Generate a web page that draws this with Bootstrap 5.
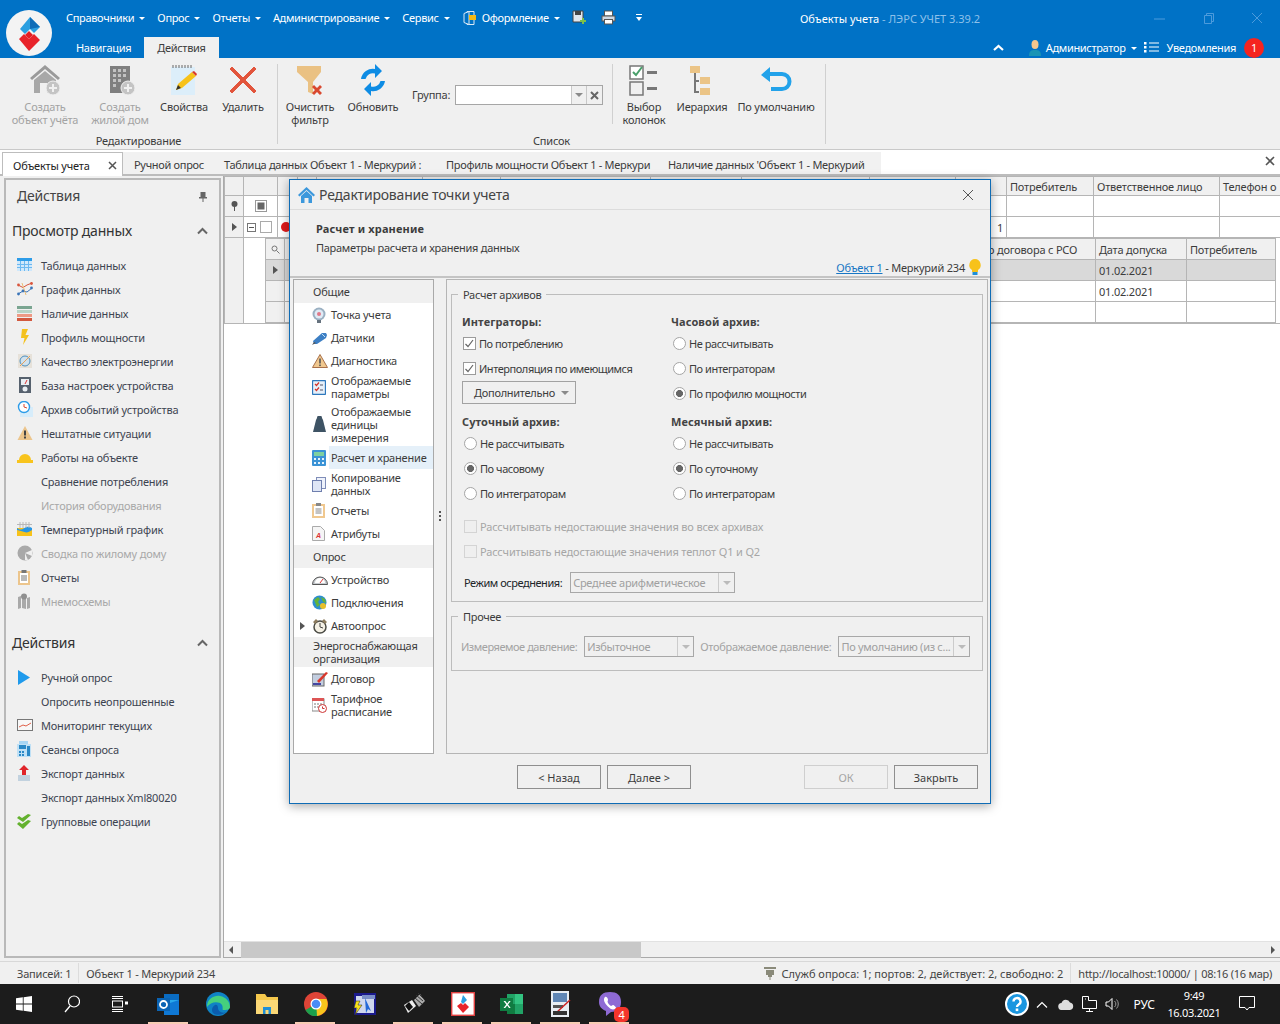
<!DOCTYPE html>
<html lang="ru"><head><meta charset="utf-8"><title>Объекты учета</title>
<link href="https://cdn.jsdelivr.net/npm/bootstrap@5.3.0/dist/css/bootstrap.min.css" rel="stylesheet">
<style>
html,body{margin:0;height:1024px;overflow:hidden}
body{font-family:"Noto Sans","Open Sans",sans-serif;font-size:11px;line-height:13px;letter-spacing:-.2px;color:#3c3c3c;background:#f0f0f0}
svg{display:block;flex:none}
.flex-none{flex:none}
.appwin{position:relative;width:1280px;height:1024px;overflow:hidden}
.topbar{height:58px;background:#0072c6;color:#fff;letter-spacing:-.32px}
.logocell{width:58px;padding:10px 0 0 6px}
.topa{height:37px;padding:0 0 2px 8px}
.topb{height:21px;padding-left:5px}
.mi{margin-right:12px;white-space:nowrap}
.care{display:inline-block;border:3px solid transparent;border-top-color:#fff;border-bottom:0;margin-left:5px;vertical-align:2px}
.ttl{position:absolute;left:800px;top:12px;white-space:nowrap;color:#fff;letter-spacing:0}
.ttl span{color:#8fc1ea}
.wctl{position:absolute;top:12px}
.gap14{margin-right:14px}.gap20{margin-right:20px}
.tb-tab{padding:4px 13px 0;height:21px;margin-right:0}
.tb-tab.on{background:#f0f0f0;color:#3c3c3c}
.ribbon{height:92px;background:#f0f0f0;border-bottom:1px solid #c9c9c9}
.rgrp{position:relative;border-right:1px solid #d0d0d0;margin-top:6px;height:80px}
.rlabel{position:absolute;left:0;right:0;top:70px;text-align:center}
.rbt{text-align:center;padding-top:0}
.rbt svg{margin:0 auto 4px}
.w52{width:52px}.w54{width:54px}.w56{width:56px}.w62{width:62px}.w66{width:66px}.w70{width:70px}.w74{width:74px}.w76{width:76px}.w94{width:94px}.w204{width:204px}
.off{color:#a3a3a3}
.rsep{width:1px;height:60px;background:#d0d0d0}
.combo{display:flex;align-items:stretch;border:1px solid #a6a6a6;background:#fff}
.combo b{font-weight:400;display:flex;align-items:center;justify-content:center;border-left:1px solid #c8c8c8}
.tri{display:inline-block;border:4px solid transparent;border-top-color:#8a8a8a;border-bottom:0}
.doctabs{height:26px;background:#fff;position:relative;padding-top:2px;border-bottom:2px solid #bcbcbc}
.dt0{width:121px;margin-left:2px;height:24px;border:1px solid #bdbdbd;border-bottom:0;background:#fff;padding:1px 5px 0 10px;color:#222}
.dtw{background:#f1f1f1;height:22px;display:flex;align-items:center;padding-top:2px;letter-spacing:-.3px}
.dt{padding-left:11px;white-space:nowrap}
.dt1{width:90px}.dt2{width:222px}.dt3{width:222px}.dt4{width:224px}
.docx{position:absolute;right:5px;top:6px}
.mainarea{height:785px;background:#f0f0f0}
.sidep{width:223px;padding:2px 2px 3px 4px}
.sideb{height:100%;border:2px solid #b9b9b9;background:#f0f0f0;position:relative;padding:0 0 0 6px}
.sh1{font-size:14px;height:39px;padding:8px 0 0 5px;line-height:16px;color:#444;position:relative}
.sh2{font-size:14px;line-height:18px;color:#333;display:flex;justify-content:space-between;align-items:center;height:24px;padding-right:11px;margin-bottom:10px}
.sl{height:24px;display:flex;align-items:center;color:#3d4450;white-space:nowrap}
.sl.off{color:#a8a8a8}
.sl i{width:29px;flex:none;display:block;padding-left:5px}
.gridw{flex:1;min-width:0;background:#fff;display:flex;flex-direction:column;border-left:1px solid #aaa;border-bottom:1px solid #aaa;margin-bottom:3px}
.gridtop{flex:1;overflow:hidden;min-height:0}
.mgrid{--bs-table-border-color:#b5b5b5;--bs-table-bg:#fff;--bs-table-color:#3c3c3c;table-layout:fixed;margin:0;font-size:11px;line-height:13px;border-color:#b5b5b5}
.mgrid td{padding:0 3px;white-space:nowrap;overflow:hidden;vertical-align:middle}
.outer{width:1075px}
.outer tr.rh{height:19px}.outer tr.rf{height:21px}.outer tr.rd{height:21px}
.hd td,.hd{--bs-table-bg:#f0f0f0;background:#f0f0f0}
td.ind{--bs-table-bg:#f0f0f0;background:#f0f0f0}
.inner{width:1010px}
.inner tr{height:21px}
.sel td{--bs-table-bg:#d9d9d9;background:#d9d9d9}
.hsb{height:16px;background:#f0f0f0;display:flex;align-items:center;border-top:1px solid #e2e2e2;padding:0 5px}
.hsb em{display:block;width:400px;height:16px;background:#c8c8c8;margin-left:8px}
.arL{border:4px solid transparent;border-right-color:#555;border-left:0}
.arR{border:4px solid transparent;border-left-color:#555;border-right:0}
.arRow{display:block;width:0;height:0;border:4px solid transparent;border-left:5px solid #555;border-right:0}
.stat{height:23px;background:#f0f0f0;border-top:1px solid #d8d8d8;padding:0 8px 0 17px;color:#444;white-space:nowrap}
.vs{width:1px;height:20px;background:#dcdcdc;margin:0 7px}
.wide{letter-spacing:0}
.httpt{letter-spacing:-.25px}
.tbar{height:40px;background:#1c1c1c;position:relative;color:#fff}
.tbi{width:49px;height:40px;display:flex;align-items:center;justify-content:center;position:relative}
.tbi.n48{width:48px}
.tbi.act::after{content:"";position:absolute;left:4px;right:5px;bottom:0;height:2px;background:#f7cdb4}
.tray{font-size:12px;line-height:17px;letter-spacing:0}
.dlg{position:absolute;left:289px;top:179px;width:702px;height:625px;background:#f0f0f0;border:1px solid #0f6cb5;box-shadow:0 2px 10px rgba(0,0,0,.35);display:flex;flex-direction:column}
.dtit{height:30px;padding:0 8px 0 8px;font-size:14px;color:#444;border-bottom:1px solid #dcdcdc}
.dhead{height:68px;padding:12px 0 0 26px;position:relative;border-bottom:2px solid #c4c4c4}
.dhead p{margin:0}
.dlink{position:absolute;right:8px;top:49px;display:flex;align-items:center;gap:3px}
.dlink a{color:#1776c4}
.dbody{height:477px;padding:1px 2px 0 3px}
.tree{width:141px;height:475px;border:1px solid #a9a9a9;background:#fff;padding:0;flex:none}
.tg{background:#f0f0f0;height:23px;display:flex;align-items:center;padding-left:19px}
.tg.h30{height:30px}
.ti{height:23px;display:flex;align-items:center;position:relative;white-space:nowrap}
.ti.h30{height:30px}.ti.h44{height:44px}
.ti i{width:35px;display:block;flex:none;padding-left:18px}
.ti span{padding-left:2px}
.ti.on span{background:#e5f0f9;align-self:stretch;display:flex;align-items:center;flex:1}
.ti .exp{position:absolute;left:6px;top:8px}
.split{width:12px;flex:none;display:flex;flex-direction:column;align-items:center;justify-content:center;gap:2px;padding-bottom:3px}
.split u{display:block;width:2px;height:2px;background:#555}
.panel{flex:1;min-width:0;height:475px;border:1px solid #b5b5b5;padding:0 4px;letter-spacing:-.28px}
fieldset.gb{border:1px solid #bdbdbd;position:relative;padding:0 10px;margin:0;min-width:0}
fieldset.gb legend{float:none;width:auto;font-size:11px;line-height:13px;padding:0 5px;margin:0 0 0 -4px;color:#3c3c3c}
.gb1{height:314px;margin-top:8px!important}
.gb2{height:61px;margin-top:8px!important}
.fcols{display:flex}
.fcol{width:209px}
.bh{font-weight:700;height:13px;line-height:13px;color:#444;letter-spacing:.1px}
.chk{display:flex;align-items:center;height:25px;gap:3px;margin:0;white-space:nowrap;letter-spacing:-.45px}
.chk.r{padding-left:1px}
.mt3{margin-top:3px}
.form-check-input.xc{margin:0 0 0 1px;width:13px;height:13px;border:1px solid #9b9b9b;border-radius:0;background-color:#fff;flex:none;box-shadow:none;float:none}
.form-check-input.xc:checked{background-color:#fff;border-color:#9b9b9b;background-image:url("data:image/svg+xml,%3csvg xmlns='http://www.w3.org/2000/svg' viewBox='0 0 13 13'%3e%3cpath fill='none' stroke='%23666' stroke-width='1.2' d='M2.5 7l2.5 2.5 5-6.5'/%3e%3c/svg%3e");background-size:13px}
.form-check-input.xr{margin:0 0 0 1px;width:13px;height:13px;border:1px solid #a5a5a5;background-color:#fff;flex:none;float:none;box-shadow:none;opacity:1}
.form-check-input.xr:checked{background-color:#fff;border-color:#a5a5a5;background-image:radial-gradient(circle,#666 0,#666 3.2px,#fff 3.8px);background-size:auto}
.form-check-input.xc:disabled{opacity:1;border-color:#d4d4d4;background-color:#efefef}
.chk.dis{opacity:1;color:#a6a6a6;letter-spacing:-.16px}
.morebtn{width:114px;height:23px;border:1px solid #a2a2a2;display:flex;align-items:center;justify-content:space-between;padding:0 6px 0 11px}
.cdis{border:1px solid #a8a8a8;background:#f0f0f0;color:#a0a0a0;height:21px;white-space:nowrap;overflow:hidden}
.cdis span{padding:3px 0 0 2px;flex:1;overflow:hidden}
.cdis b{width:16px;border-left:1px solid #ccc}
.cdis .tri{border-top-color:#bbb}
.w165{width:165px}.w110{width:110px}.w132{width:132px}
.dfoot{flex:1;padding:10px 12px 0 227px;gap:6px}
.dbtn{width:84px;height:24px;border:1px solid #8f8f8f;border-radius:0;background:transparent;font-size:11px;line-height:13px;padding:0;color:#3c3c3c}
.dbtn:disabled{border-color:#cfcfcf;color:#a5a5a5;opacity:1;background:transparent}
.m107{margin-left:107px}
.pt0{padding-top:0}
#ntf{width:20px;height:20px;background:#f5241f;font-size:11px}
#rg1{width:278px}#rg2{width:548px}
#glab{margin-top:24px;width:43px}
#gcomb{width:148px;height:20px;margin-top:21px}
#gb1,#gb2{background:#f0f0f0}
#gb1{width:15px}#gb2{width:16px}
#pinic{right:12px;top:12px}
.mhead{margin-top:18px}
.detail{padding:0 0 0 21px!important}
.c19{width:19px}.c20{width:20px}.c34{width:34px}.c51{width:51px}.c78{width:78px}.c80{width:80px}.c86{width:86px}.c87{width:87px}.c89{width:89px}.c91{width:91px}.c106{width:106px}.c119{width:119px}.c126{width:126px}.c128{width:128px}.c150{width:150px}.c692{width:692px}
#vib{right:5px;bottom:2px;width:15px;height:15px;background:#f5352c;border-radius:5px;font-size:11px}
#lng{margin:0 2px 0 4px}
#clk{margin-right:8px;width:74px;font-size:11px;letter-spacing:-.3px}
#ntc{margin-right:25px}
#tq{margin-right:7px}#tc{margin-right:10px}
#fc1{margin-top:14px}#fc2{margin-top:9px}
#d1{margin-top:8px}
#rmode{margin:8px 0 0 2px}
#rmode>span{letter-spacing:-.45px}
#adm{margin-right:7px}
#dav{margin:13px 0 0 -1px;white-space:nowrap}
#dl1{letter-spacing:-.45px}
#dc1{margin:0 6px 0 7px}
#dc2{margin-left:7px}
#hb{margin-bottom:6px;letter-spacing:.15px}
#hp{letter-spacing:-.28px}
</style></head><body>
<div class="appwin d-flex flex-column">

<!-- title bar -->
<div class="topbar d-flex flex-none">
 <div class="logocell"><svg width="46" height="46" viewBox="0 0 46 46"><circle cx="23" cy="23" r="23" fill="#f3f3f3"/><path d="M24 7l10 10-6 6-4-4-5 5-5-5z" fill="#2b9fe0"/><path d="M24 7l10 10-10 2z" fill="#0d6cb8"/><path d="M23 21l4 4-4 4-4-4z" fill="#e31e24"/><path d="M13 29l5-5 5 5 5-5 6 6-11 11z" fill="#e8232a"/></svg></div>
 <div class="flex-grow-1">
  <div class="topa d-flex align-items-center">
   <span class="mi">Справочники<i class="care"></i></span><span class="mi">Опрос<i class="care"></i></span><span class="mi">Отчеты<i class="care"></i></span><span class="mi">Администрирование<i class="care"></i></span><span class="mi">Сервис<i class="care"></i></span>
   <svg class="me-1" width="16" height="16" viewBox="0 0 16 16"><path d="M5 1.5h7v13H5z" fill="none" stroke="#dbe9f5"/><path d="M2 3.5l5-2v13l-5-2z" fill="#0072c6" stroke="#dbe9f5"/><rect x="7" y="5" width="7" height="5" fill="#f5b915"/></svg>
   <span class="mi">Оформление<i class="care"></i></span>
   <svg class="gap14" width="15" height="15" viewBox="0 0 15 15"><path d="M1 1h10v11H1z" fill="#dfe6ee" stroke="#444"/><rect x="3" y="1" width="6" height="4" fill="#444"/><path d="M10 8h2v2h2v2h-2v2h-2v-2H8v-2h2z" fill="#7cc04a"/></svg>
   <svg class="gap20" width="15" height="15" viewBox="0 0 15 15"><rect x="3.5" y="1" width="8" height="5" fill="#fff" stroke="#555"/><rect x="1" y="6" width="13" height="5" fill="#cfd8e2" stroke="#555"/><rect x="3.5" y="9.500" width="8" height="4.500" fill="#fff" stroke="#555"/></svg>
   <svg width="6" height="8" viewBox="0 0 6 8"><path d="M0 0h6v1H0zM0 3h6L3 7z" fill="#fff"/></svg>
  </div>
  <div class="topb d-flex">
   <span class="tb-tab">Навигация</span><span class="tb-tab on">Действия</span>
   <div class="ms-auto d-flex align-items-center pe-0">
    <svg class="gap20" width="11" height="8" viewBox="0 0 11 8"><path d="M1 6l4.500-4L10 6" fill="none" stroke="#fff" stroke-width="2.200"/></svg>
    <svg class="ms-1 me-1" width="14" height="16" viewBox="0 0 14 16"><ellipse cx="7" cy="4.500" rx="3.500" ry="4.500" fill="#f5c68d"/><path d="M1 16c0-5 2-6 6-6s6 1 6 6z" fill="#1994b5"/></svg>
    <span class="mi" id="adm">Администратор<i class="care"></i></span>
    <svg class="me-1" width="15" height="11" viewBox="0 0 15 11"><path d="M0 0h2.500v2.500H0zM0 4h2.500v2.500H0zM0 8h2.500v2.500H0zM5 .5h10v1H5zM5 4.500h10v1H5zM5 8.500h10v1H5z" fill="#fff"/></svg>
    <span class="ms-1">Уведомления</span>
    <span class="d-flex align-items-center justify-content-center rounded-circle ms-2 me-3" id="ntf">1</span>
   </div>
  </div>
 </div>
</div>
<div class="ttl">Объекты учета <span>- ЛЭРС УЧЕТ 3.39.2</span></div>
<svg class="wctl" style="left:1153px" width="13" height="13" viewBox="0 0 13 13"><path d="M1 7h11" stroke="#4c9bdc"/></svg>
<svg class="wctl" style="left:1203px" width="12" height="13" viewBox="0 0 12 13"><path d="M1.500 3.500h7v8h-7zM3.500 3.500V1.500h7v8h-2" fill="none" stroke="#4c9bdc"/></svg>
<svg class="wctl" style="left:1251px" width="12" height="12" viewBox="0 0 12 12"><path d="M1 1l10 10M11 1L1 11" stroke="#4c9bdc"/></svg>

<!-- ribbon -->
<div class="ribbon d-flex flex-none">
 <div class="rgrp d-flex ps-2" id="rg1">
  <div class="rbt w74 off"><svg width="32" height="32" viewBox="0 0 32 32"><path d="M16 1L1 14l2 2L16 5l13 11 2-2z" fill="#9a9a9a"/><path d="M5 16l11-9 11 9v13H5z" fill="#a8a8a8"/><rect x="11" y="19" width="7" height="10" fill="#f0f0f0"/><circle cx="24" cy="24" r="7" fill="#c4c4c4" stroke="#f0f0f0"/><path d="M23 20h2v3h3v2h-3v3h-2v-3h-3v-2h3z" fill="#f0f0f0"/></svg>Создать<br>объект учёта</div>
  <div class="rbt w76 off"><svg width="32" height="32" viewBox="0 0 32 32"><rect x="6" y="2" width="20" height="27" fill="#7f7f7f"/><path d="M9 5h3v3H9zM14 5h3v3h-3zM19 5h3v3h-3zM9 10h3v3H9zM14 10h3v3h-3zM19 10h3v3h-3zM9 15h3v3H9zM14 15h3v3h-3zM9 20h3v3H9z" fill="#c2c2c2"/><circle cx="24" cy="24" r="7" fill="#c4c4c4" stroke="#f0f0f0"/><path d="M23 20h2v3h3v2h-3v3h-2v-3h-3v-2h3z" fill="#f0f0f0"/></svg>Создать<br>жилой дом</div>
  <div class="rbt w52"><svg width="32" height="32" viewBox="0 0 32 32"><rect x="3" y="3" width="24" height="28" fill="#dceefa"/><path d="M5 1v3M8 1v3M11 1v3M14 1v3M17 1v3M20 1v3M23 1v3" stroke="#666"/><path d="M8 26l2-6L24 8l4 4-14 12z" fill="#f7c21a"/><path d="M24 8l2-1 3 3-1 2z" fill="#d9372a"/><path d="M8 26l2-5 3 3z" fill="#333"/></svg>Свойства</div>
  <div class="rbt w66"><svg width="32" height="32" viewBox="0 0 32 32"><path d="M5 3L3 5l11 11L3 27l2 2 11-11 11 11 2-2-11-11L29 5l-2-2-11 11z" fill="#e2553c" stroke="#e2553c"/></svg>Удалить</div>
  <div class="rlabel">Редактирование</div>
 </div>
 <div class="rgrp d-flex ps-1" id="rg2">
  <div class="rbt w56"><svg width="32" height="32" viewBox="0 0 32 32"><path d="M3 2h24v6l-8 10v12l-5-2V18L3 8z" fill="#eac183"/><path d="M20 21l3 3 3-3 2 2-3 3 3 3-2 2-3-3-3 3-2-2 3-3-3-3z" fill="#d9482f"/></svg>Очистить<br>фильтр</div>
  <div class="rbt w70"><svg width="32" height="32" viewBox="0 0 32 32"><path d="M4 15A12 12 0 0 1 18 5V0l7 7-7 7V9.500A7.500 7.500 0 0 0 8.500 15z" fill="#0e8ce4"/><path d="M28 17A12 12 0 0 1 14 27v5l-7-7 7-7v4.500A7.500 7.500 0 0 0 23.500 17z" fill="#0e8ce4"/></svg>Обновить</div>
  <div class="w204 d-flex align-items-start ps-1"><span class="pt-0" id="glab">Группа:</span><div class="combo" id="gcomb"><span class="flex-grow-1"></span><b id="gb1"><i class="tri"></i></b><b id="gb2"><svg width="9" height="9" viewBox="0 0 9 9"><path d="M1 1l7 7M8 1L1 8" stroke="#666" stroke-width="2"/></svg></b></div></div>
  <div class="rsep"></div>
  <div class="rbt w62"><svg width="32" height="32" viewBox="0 0 32 32"><rect x="2" y="2" width="13" height="13" fill="#fff" stroke="#777" stroke-width="1.500"/><path d="M5 8l3 3 6-8" fill="none" stroke="#49a06b" stroke-width="2"/><rect x="2" y="18" width="13" height="13" fill="none" stroke="#777" stroke-width="1.500"/><path d="M19 7h10v3H19zM19 23h10v3H19z" fill="#777"/></svg>Выбор<br>колонок</div>
  <div class="rbt w54"><svg width="32" height="32" viewBox="0 0 32 32"><rect x="4" y="2" width="10" height="7" fill="#ebc486"/><path d="M9 9v19h4M9 17h4" fill="none" stroke="#777" stroke-width="2"/><rect x="14" y="13" width="10" height="7" fill="#ebc486"/><rect x="14" y="24" width="10" height="7" fill="#ebc486"/></svg>Иерархия</div>
  <div class="rbt w94"><svg width="32" height="32" viewBox="0 0 32 32"><path d="M1 11l9-8v5h12a8.500 8.500 0 0 1 0 19H11v-4h11a4.500 4.500 0 0 0 0-11H10v6z" fill="#22a2ea"/></svg>По умолчанию</div>
  <div class="rlabel">Список</div>
 </div>
</div>

<!-- document tabs -->
<div class="doctabs d-flex flex-none">
 <div class="dt0 d-flex align-items-center justify-content-between"><span>Объекты учета</span><svg width="9" height="9" viewBox="0 0 9 9"><path d="M1 1l7 7M8 1L1 8" stroke="#555" stroke-width="1.500"/></svg></div>
 <div class="dtw"><div class="dt dt1">Ручной опрос</div><div class="dt dt2">Таблица данных Объект 1 - Меркурий :</div><div class="dt dt3">Профиль мощности Объект 1 - Меркури</div><div class="dt dt4">Наличие данных 'Объект 1 - Меркурий</div></div>
 <svg class="docx" width="10" height="10" viewBox="0 0 10 10"><path d="M1 1l8 8M9 1L1 9" stroke="#555" stroke-width="1.600"/></svg>
</div>

<!-- main -->
<div class="mainarea d-flex flex-none">
 <div class="sidep flex-none">
  <div class="sideb">
   <div class="sh1 pin">Действия<svg class="position-absolute" id="pinic" width="8" height="10" viewBox="0 0 8 10"><path d="M1.500 0h5v5h1.500v1.500H4.500V10h-1V6.500H0V5h1.500z" fill="#666"/></svg></div>
   <div class="sh2">Просмотр данных<svg width="11" height="8" viewBox="0 0 11 8"><path d="M1 6.500l4.500-4.500 4.500 4.500" fill="none" stroke="#666" stroke-width="2"/></svg></div>
   <div id="sb1">
   <div class="sl"><i><svg width="16" height="14" viewBox="0 0 16 14"><rect width="15" height="13" fill="#cfe8fb"/><rect width="15" height="3" fill="#2d9ce8"/><path d="M0 6.500h15M0 9.500h15M3.500 3v10M7.500 3v10M11.500 3v10" stroke="#6cb8f0"/></svg></i>Таблица данных</div>
   <div class="sl"><i><svg width="16" height="14" viewBox="0 0 16 14"><path d="M1 3l5 2.500L10 3l5-2" fill="none" stroke="#d9553c"/><path d="M1 12l5-3 4 1 5-4" fill="none" stroke="#3a74b8"/><path d="M5 1l4 12" stroke="#ecbe76"/><circle cx="1.500" cy="3" r="1.400" fill="#d9553c"/><circle cx="14.500" cy="1.500" r="1.400" fill="#d9553c"/><circle cx="6" cy="9" r="1.400" fill="#3a74b8"/><circle cx="1.500" cy="12" r="1.400" fill="#3a74b8"/><circle cx="14.500" cy="6" r="1.400" fill="#3a74b8"/></svg></i>График данных</div>
   <div class="sl"><i><svg width="16" height="15" viewBox="0 0 16 15"><rect width="15" height="3" fill="#7aa591"/><rect y="4" width="15" height="3" fill="#b8d4c6"/><rect y="8" width="15" height="3" fill="#ed9a85"/><rect y="12" width="15" height="3" fill="#d2593f"/></svg></i>Наличие данных</div>
   <div class="sl"><i><svg width="16" height="16" viewBox="0 0 16 16"><path d="M5 0h6L8.500 6H12L6 16l1.500-7H4z" fill="#f4c21f"/></svg></i>Профиль мощности</div>
   <div class="sl"><i><svg width="16" height="16" viewBox="0 0 16 16"><rect x="1" y="1" width="14" height="14" fill="#e6e1d9"/><circle cx="8" cy="8" r="5" fill="#cfe1ee" stroke="#4d8fbd"/><path d="M3 13l10-10" stroke="#e6a15a"/></svg></i>Качество электроэнергии</div>
   <div class="sl"><i><svg width="16" height="16" viewBox="0 0 16 16"><rect x="2" width="12" height="16" fill="#56616e"/><rect x="4" y="2" width="8" height="6" fill="#e9eef2"/><path d="M8 7l2-4" stroke="#d33"/><circle cx="8" cy="12" r="2.500" fill="#e9eef2"/></svg></i>База настроек устройства</div>
   <div class="sl"><i><svg width="16" height="16" viewBox="0 0 16 16"><rect x="3" y="6" width="13" height="10" fill="#d6ecfa"/><circle cx="7" cy="6" r="5.500" fill="#fff" stroke="#2d9ce8" stroke-width="1.400"/><path d="M7 3v3l3 1" fill="none" stroke="#d9482f"/></svg></i>Архив событий устройства</div>
   <div class="sl"><i><svg width="16" height="14" viewBox="0 0 16 14"><path d="M8 0l7.500 14H.5z" fill="#ecc58c"/><rect x="7" y="4.500" width="2" height="5" fill="#444"/><rect x="7" y="10.500" width="2" height="2" fill="#444"/></svg></i>Нештатные ситуации</div>
   <div class="sl"><i><svg width="16" height="12" viewBox="0 0 16 12"><path d="M2 9a6 6 0 0 1 12 0h2v3H0V9z" fill="#f8c41d"/></svg></i>Работы на объекте</div>
   <div class="sl"><i></i>Сравнение потребления</div>
   <div class="sl off"><i></i>История оборудования</div>
   <div class="sl"><i><svg width="16" height="14" viewBox="0 0 16 14"><rect y="6" width="15" height="8" fill="#f7c21a"/><path d="M0 6c3 2 4 2 7.500 0s5-1 7.500 0v2c-3 2-5 3-7.500 2S3 9 0 8z" fill="#2896e4"/><path d="M3 0v6M6 0v6M9 0v6M12 0v6M0 2.500h15" stroke="#b8b8b8"/></svg></i>Температурный график</div>
   <div class="sl off"><i><svg width="16" height="16" viewBox="0 0 16 16"><circle cx="8" cy="8" r="7.500" fill="#a9a9a9"/><path d="M8 8l7-3v6z" fill="#f0f0f0"/><path d="M8 8l3 7H8z" fill="#f0f0f0"/></svg></i>Сводка по жилому дому</div>
   <div class="sl"><i><svg width="14" height="15" viewBox="0 0 14 15"><rect x="1" y="1" width="12" height="14" fill="#ecc58c"/><rect x="3" y="3" width="8" height="10" fill="#fff"/><rect x="4.500" width="5" height="3" fill="#777"/><path d="M4 6h6M4 8h6M4 10h6" stroke="#777"/></svg></i>Отчеты</div>
   <div class="sl off"><i><svg width="14" height="16" viewBox="0 0 14 16"><path d="M1 4l3-1v12l-3 1zM5 3l4 2v11l-4-1zM10 5l3-1v11l-3 1z" fill="#a9a9a9"/><circle cx="7" cy="3.500" r="3" fill="#8f8f8f"/></svg></i>Мнемосхемы</div>
   </div>
   <div class="sh2 mhead">Действия<svg width="11" height="8" viewBox="0 0 11 8"><path d="M1 6.500l4.500-4.500 4.500 4.500" fill="none" stroke="#666" stroke-width="2"/></svg></div>
   <div id="sb2">
   <div class="sl"><i><svg width="14" height="15" viewBox="0 0 14 15"><path d="M1 0l12 7.500L1 15z" fill="#1f9aec"/></svg></i>Ручной опрос</div>
   <div class="sl"><i></i>Опросить неопрошенные</div>
   <div class="sl"><i><svg width="16" height="12" viewBox="0 0 16 12"><rect x=".5" y=".5" width="15" height="11" fill="#f8f8f8" stroke="#777"/><path d="M2 8l4-2 3 1 5-3" fill="none" stroke="#e0604a"/></svg></i>Мониторинг текущих</div>
   <div class="sl"><i><svg width="15" height="16" viewBox="0 0 15 16"><rect x="2" width="9" height="3" fill="#a8d6f4"/><rect y="3" width="14" height="13" fill="#bfe0f5"/><rect x="2" y="4" width="7" height="4" fill="#2a88c6"/><path d="M2 10h2v2H2zM5 10h2v2H5zM2 13h2v2H2zM5 13h2v2H5zM10 5h3v10h-3z" fill="#2a88c6"/></svg></i>Сеансы опроса</div>
   <div class="sl"><i><svg width="14" height="16" viewBox="0 0 14 16"><rect x="1" y="10" width="12" height="6" fill="#c2d2df"/><path d="M7 0l5 5H9v5H5V5H2z" fill="#e0252a"/></svg></i>Экспорт данных</div>
   <div class="sl"><i></i>Экспорт данных Xml80020</div>
   <div class="sl"><i><svg width="14" height="15" viewBox="0 0 14 15"><path d="M0 4l2-2 3 2 6-4 3 1-8 7zM0 10l2-2 3 2 6-4 3 1-8 8z" fill="#63b12e"/></svg></i>Групповые операции</div>
   </div>
  </div>
 </div>
 <div class="gridw">
  <div class="gridtop">
  <table class="table table-bordered mgrid outer">
   <colgroup><col class="c19"><col class="c34"><col class="c20"><col class="c19"><col class="c106"><col class="c78"><col class="c150"><col class="c91"><col class="c128"><col class="c86"><col class="c51"><col class="c87"><col class="c126"><col class="c80"></colgroup>
   <tr class="rh hd"><td></td><td></td><td></td><td></td><td></td><td></td><td></td><td></td><td></td><td></td><td>&nbsp;</td><td>Потребитель</td><td>Ответственное лицо</td><td>Телефон о</td></tr>
   <tr class="rf"><td class="ind"><svg class="mx-auto" width="7" height="10" viewBox="0 0 7 10"><circle cx="3.500" cy="3" r="3" fill="#555"/><path d="M3 5h1v5H3z" fill="#555"/></svg></td><td><svg class="mx-auto" width="12" height="12" viewBox="0 0 12 12"><rect x=".5" y=".5" width="11" height="11" fill="#fff" stroke="#999"/><rect x="2.500" y="2.500" width="7" height="7" fill="#666"/></svg></td><td></td><td></td><td></td><td></td><td></td><td></td><td></td><td></td><td></td><td></td><td></td><td></td></tr>
   <tr class="rd"><td class="ind"><i class="arRow mx-auto"></i></td><td class="pt0"><div class="d-flex align-items-center gap-1"><svg width="9" height="9" viewBox="0 0 9 9"><rect x=".5" y=".5" width="8" height="8" fill="#fff" stroke="#777"/><path d="M2 4.500h5" stroke="#555"/></svg><svg width="12" height="12" viewBox="0 0 12 12"><rect x=".5" y=".5" width="11" height="11" fill="#fff" stroke="#aaa"/></svg></div></td><td><svg width="10" height="10" viewBox="0 0 10 10"><circle cx="5" cy="5" r="5" fill="#e01b1b"/></svg></td><td></td><td></td><td></td><td></td><td></td><td></td><td></td><td class="text-end">1</td><td></td><td></td><td></td></tr>
   <tr><td class="ind"></td><td colspan="13" class="detail">
    <table class="table table-bordered mgrid inner">
     <colgroup><col class="c19"><col class="c692"><col class="c119"><col class="c91"><col class="c89"></colgroup>
     <tr class="hd"><td><svg class="mx-auto" width="9" height="9" viewBox="0 0 9 9"><circle cx="3.500" cy="3.500" r="2.500" fill="none" stroke="#777"/><path d="M5.500 5.500L8.500 8.500" stroke="#777"/></svg></td><td></td><td>Но договора с РСО</td><td>Дата допуска</td><td>Потребитель</td></tr>
     <tr class="sel"><td class="ind"><i class="arRow mx-auto"></i></td><td></td><td></td><td>01.02.2021</td><td></td></tr>
     <tr><td class="ind"></td><td></td><td></td><td>01.02.2021</td><td></td></tr>
     <tr><td class="ind"></td><td></td><td></td><td></td><td></td></tr>
    </table>
   </td></tr>
  </table>
  </div>
  <div class="hsb"><i class="arL"></i><em></em><i class="arR ms-auto"></i></div>
 </div>
</div>

<!-- status -->
<div class="stat d-flex align-items-center flex-none">
 <span>Записей: 1</span><span class="vs"></span><span>Объект 1 - Меркурий 234</span>
 <svg class="ms-auto me-1" width="14" height="14" viewBox="0 0 14 14"><path d="M1 1h12v2H1zM3 4h8v5H3zM5 9h4v2H5zM6.500 11h1v3h-1z" fill="#8a8a7a"/></svg>
 <span class="wide">Служб опроса: 1; портов: 2, действует: 2, свободно: 2</span><span class="vs"></span><span class="httpt">http://localhost:10000/ | 08:16 (16 мар)</span>
</div>

<!-- taskbar -->
<div class="tbar d-flex align-items-center flex-none">
 <div class="tbi n48"><svg width="16" height="16" viewBox="0 0 16 16"><path d="M0 2.300l6.800-1v6.200H0zM7.600 1.200L16 0v7.500H7.600zM0 8.400h6.800v6.300L0 13.700zM7.600 8.400H16V16l-8.400-1.200z" fill="#fff"/></svg></div>
 <div class="tbi n48"><svg width="16" height="18" viewBox="0 0 16 18"><circle cx="10" cy="6.500" r="5.500" fill="none" stroke="#fff" stroke-width="1.200"/><path d="M6 11l-5 6" stroke="#fff" stroke-width="1.300"/></svg></div>
 <div class="tbi n48"><svg width="16" height="16" viewBox="0 0 16 16"><path d="M0 .5h11M0 15.500h11M0 2.500h11M0 13.500h11" stroke="#fff"/><rect x=".5" y="5" width="10" height="6" fill="none" stroke="#fff"/><rect x="13" y="5.500" width="3" height="3" fill="#fff"/></svg></div>
 <div class="tbi act"><svg width="24" height="24" viewBox="0 0 24 24"><path d="M7 2h15v21H7z" fill="#28a8ea"/><path d="M7 2h15v6H7z" fill="#0a6cc2"/><path d="M7 13l15-5v15H7z" fill="#0f78d4"/><rect y="6" width="13" height="13" fill="#0b64b4"/><circle cx="6.500" cy="12.500" r="3.500" fill="none" stroke="#fff" stroke-width="1.800"/></svg></div>
 <div class="tbi"><svg width="24" height="24" viewBox="0 0 24 24"><circle cx="12" cy="12" r="12" fill="#0f83c5"/><path d="M1 15C1 6 9 3 14 4c6 1 10 6 10 11 0 3-4 3-7 3-1 0 1-5-3-7-5-2-10 0-13 4z" fill="#46d07d"/><path d="M9 13c2-1 3 1 3 3 0 3 4 6 8 4-4 4-14 4-14-2 0-2 1-4 3-5z" fill="#0b5cad"/></svg></div>
 <div class="tbi"><svg width="24" height="22" viewBox="0 0 24 22"><path d="M1 1h9l2 3h11v17H1z" fill="#f5c84c"/><path d="M1 7h22v14H1z" fill="#fbd876"/><rect x="8" y="14" width="8" height="7" fill="#1f8fd8"/><rect x="10.500" y="17" width="3" height="4" fill="#fbd876"/></svg></div>
 <div class="tbi act"><svg width="24" height="24" viewBox="0 0 24 24"><circle cx="12" cy="12" r="12" fill="#dd4437"/><path d="M12 12L1.500 18A12 12 0 0 0 14 24z" fill="#1ca04c"/><path d="M12 7h10.500A12 12 0 0 1 13 24z" fill="#f8c51c"/><circle cx="12" cy="12" r="5.500" fill="#fff"/><circle cx="12" cy="12" r="4.300" fill="#4a8cf6"/></svg></div>
 <div class="tbi"><svg width="24" height="24" viewBox="0 0 24 24"><rect x="1" y="1" width="22" height="22" fill="#1a1a8c"/><rect x="3" y="4" width="18" height="17" fill="#cfd8ee"/><path d="M9 3h13v4H9z" fill="#7a8fc8"/><path d="M12 6l6 13-3-2-2 4z" fill="#2268d8"/><path d="M7 9h-4L1 16h3l-2 7 7-10H5z" fill="#f6e21a" stroke="#222" stroke-width=".5"/></svg></div>
 <div class="tbi act"><svg width="24" height="24" viewBox="0 0 24 24"><path d="M2 13l8-5 4 6-8 7z" fill="#eee"/><path d="M12 8l6-6 5 7-6 6z" fill="#aaa"/><path d="M3 14l4 5 4-4-4-5z" fill="#111"/><path d="M14 3l7 6M13 6l7 6M16 1l6 6" stroke="#333"/></svg></div>
 <div class="tbi act"><svg width="24" height="24" viewBox="0 0 24 24"><rect width="24" height="24" fill="#fff"/><rect x=".7" y=".7" width="22.600" height="22.600" fill="none" stroke="#e04040" stroke-width="1.400"/><path d="M12 3l4 5-4 4-2-2z" fill="#2b9fe0"/><path d="M6 14l4-3 2 2 2-2 4 4-6 6z" fill="#e8232a"/></svg></div>
 <div class="tbi act"><svg width="24" height="24" viewBox="0 0 24 24"><rect x="7" y="2" width="16" height="20" fill="#21a366"/><rect x="15" y="2" width="8" height="10" fill="#33c481"/><rect x="7" y="12" width="8" height="10" fill="#107c41"/><rect y="6" width="13" height="13" fill="#107c41"/><path d="M3.500 9l2.800 3.500L3.500 16h1.700l2-2.500 1.800 2.500h1.700L8 12.500 10.700 9H9l-1.800 2.400L5.300 9z" fill="#fff"/></svg></div>
 <div class="tbi act"><svg width="22" height="26" viewBox="0 0 22 26"><rect x="1" y="0" width="18" height="26" fill="#e8edf2"/><rect x="3" y="2" width="14" height="9" fill="#5f86b5"/><rect x="3" y="14" width="10" height="3" fill="#555"/><path d="M20 9L6 22" stroke="#c22" stroke-width="1.500"/><rect x="3" y="20" width="14" height="4" fill="#333"/></svg></div>
 <div class="tbi act"><svg width="24" height="26" viewBox="0 0 24 26"><path d="M12 1c7 0 11 3 11 10s-4 10-10 10l-5 4v-5C3 18 1 15 1 11 1 4 5 1 12 1z" fill="#8e6ad4"/><path d="M7 6c2-1 3 2 3 3s-1 1 0 3 3 3 3 3c1 0 1-1 2-1s3 2 3 3-3 2-5 1-7-6-7-9c0-1 0-2 1-3z" fill="#fff"/></svg><span class="position-absolute d-flex align-items-center justify-content-center" id="vib">4</span></div>

 <div class="tray ms-auto d-flex align-items-center">
  <svg id="tq" width="24" height="24" viewBox="0 0 24 24"><circle cx="12" cy="12" r="11" fill="#1a96e0" stroke="#fff" stroke-width="2"/><path d="M8.500 9.500a3.500 3.500 0 1 1 5 3.200c-1 .6-1.500 1-1.500 2.300" fill="none" stroke="#fff" stroke-width="2.400"/><rect x="10.700" y="16.500" width="2.600" height="2.600" fill="#fff"/></svg>
  <svg id="tc" width="12" height="7" viewBox="0 0 12 7"><path d="M1 6.500l5-5 5 5" fill="none" stroke="#fff" stroke-width="1.200"/></svg>
  <svg class="me-2" width="16" height="11" viewBox="0 0 16 11"><path d="M4 11a3.500 3.500 0 0 1-.5-7A4.500 4.500 0 0 1 12 3.500a3.800 3.800 0 0 1 0 7.500z" fill="#ddd"/></svg>
  <svg class="me-2" width="15" height="16" viewBox="0 0 15 16"><path d="M.5.500h6v4h8v8h-14z" fill="none" stroke="#fff"/><path d="M7.500 12.500v3M4 15.500h7M3 3h1" stroke="#fff"/></svg>
  <svg class="me-2" width="16" height="14" viewBox="0 0 16 14"><path d="M1 5h2.500L7 1.500v11L3.500 9H1z" fill="none" stroke="#fff"/><path d="M9.500 4a4 4 0 0 1 0 6M11.500 2.500a6.500 6.500 0 0 1 0 9" fill="none" stroke="#999"/></svg>
  <span id="lng">РУС</span>
  <div class="text-center" id="clk">9:49<br>16.03.2021</div>
  <svg id="ntc" width="16" height="16" viewBox="0 0 16 16"><path d="M.5.500h15v11H10l-2 2.500-2-2.500H.5z" fill="none" stroke="#fff"/></svg>
 </div>
</div>

<!-- dialog -->
<div class="dlg">
 <div class="dtit d-flex align-items-center flex-none">
  <svg class="me-1" width="17" height="16" viewBox="0 0 17 16"><path d="M8.500 0L0 8l1.500 1.500L8.500 3l7 6.500L17 8z" fill="#3c98dc"/><path d="M3 9l5.500-5L14 9v7h-3.500v-5h-4v5H3z" fill="#3c98dc"/></svg>
  <span>Редактирование точки учета</span>
  <svg class="ms-auto me-2" width="12" height="12" viewBox="0 0 12 12"><path d="M1 1l10 10M11 1L1 11" stroke="#555"/></svg>
 </div>
 <div class="dhead flex-none">
  <p class="fw-bold" id="hb">Расчет и хранение</p>
  <p id="hp">Параметры расчета и хранения данных</p>
  <div class="dlink"><span><a href="#">Объект 1</a> - Меркурий 234</span><svg width="14" height="17" viewBox="0 0 14 17"><path d="M7 0a6 6 0 0 1 3 11v2H4v-2A6 6 0 0 1 7 0z" fill="#f7c21a"/><rect x="4.500" y="13" width="5" height="3" fill="#1f8fd8"/></svg></div>
 </div>
 <div class="dbody d-flex flex-none">
  <div class="tree">
   <div class="tg">Общие</div>
   <div class="ti"><i><svg width="14" height="16" viewBox="0 0 14 16"><circle cx="7" cy="7" r="6.500" fill="#9ab0c2"/><circle cx="7" cy="7" r="4.500" fill="#dfeaf5"/><circle cx="7" cy="7" r="2" fill="#e07a8a"/><rect x="5" y="13" width="4" height="3" fill="#66727e"/></svg></i><span>Точка учета</span></div>
   <div class="ti"><i><svg width="16" height="14" viewBox="0 0 16 14"><path d="M1 10l9-8 4 0 1 2-1 3-9 6H2z" fill="#3d7fc4"/><path d="M0 14l2-3 2 1z" fill="#555"/><path d="M10 3l3 3" stroke="#bfe0f8"/></svg></i><span>Датчики</span></div>
   <div class="ti"><i><svg width="16" height="14" viewBox="0 0 16 14"><path d="M8 .5L15.500 13.500H.5z" fill="#f0c88f" stroke="#a8704a"/><rect x="7.200" y="4.500" width="1.600" height="5" fill="#555"/><rect x="7.200" y="10.500" width="1.600" height="1.600" fill="#555"/></svg></i><span>Диагностика</span></div>
   <div class="ti h30"><i><svg width="14" height="15" viewBox="0 0 14 15"><rect x=".5" y=".5" width="13" height="14" rx="1" fill="#e6f0fa" stroke="#2e78bd" stroke-width="1.300"/><path d="M3 4l1.500 1.500L7 2.500M3 9l1.500 1.500L7 7.500" fill="none" stroke="#d3342a" stroke-width="1.200"/><path d="M8 5h3M8 10h3" stroke="#556"/></svg></i><span>Отображаемые<br>параметры</span></div>
   <div class="ti h44"><i><svg width="15" height="16" viewBox="0 0 15 16"><path d="M5 2a2.500 2.500 0 0 1 5 0l1 2 3 12H1L4 4z" fill="#3e5364"/></svg></i><span>Отображаемые<br>единицы<br>измерения</span></div>
   <div class="ti on"><i><svg width="14" height="16" viewBox="0 0 14 16"><rect width="14" height="16" rx="1" fill="#3b93d6"/><rect x="2" y="2" width="10" height="4" fill="#7ed0a0"/><path d="M2 8h2v2H2zM6 8h2v2H6zM10 8h2v2h-2zM2 12h2v2H2zM6 12h2v2H6zM10 12h2v2h-2z" fill="#e6f3fc"/></svg></i><span>Расчет и хранение</span></div>
   <div class="ti h30"><i><svg width="14" height="15" viewBox="0 0 14 15"><rect x="4.500" y=".5" width="9" height="11" fill="#eef2fb" stroke="#7f8db8"/><rect x=".5" y="3.500" width="9" height="11" fill="#dfe6f5" stroke="#6f7fae"/></svg></i><span>Копирование<br>данных</span></div>
   <div class="ti"><i><svg width="13" height="15" viewBox="0 0 13 15"><rect y="1" width="13" height="14" fill="#f0c88f"/><rect x="2" y="3" width="9" height="10" fill="#fff"/><rect x="4" width="5" height="3" fill="#888"/><path d="M3.500 6h6M3.500 8h6M3.500 10h6" stroke="#888"/></svg></i><span>Отчеты</span></div>
   <div class="ti"><i><svg width="13" height="15" viewBox="0 0 13 15"><path d="M.5.500h8l4 4v10H.5z" fill="#f5f5f5" stroke="#aaa"/><text x="6.500" y="12" text-anchor="middle" font-size="7" font-family="Liberation Sans" font-weight="700" fill="#d33">A</text></svg></i><span>Атрибуты</span></div>
   <div class="tg">Опрос</div>
   <div class="ti"><i><svg width="16" height="11" viewBox="0 0 16 11"><path d="M.5 10.500a7.500 7.500 0 0 1 15 0z" fill="#c8ccd0" stroke="#555"/><path d="M3 9a5 5 0 0 1 10 0z" fill="#fff"/><path d="M8 9l3-4" stroke="#d33"/></svg></i><span>Устройство</span></div>
   <div class="ti"><i><svg width="15" height="15" viewBox="0 0 15 15"><circle cx="7.500" cy="7.500" r="7" fill="#2d8ed0"/><path d="M2 5l4-3 2 2-2 3 2 3-3 2zM9 2l4 2 1 4-3-1z" fill="#62b33c"/><circle cx="11" cy="11" r="3" fill="#e8c02a"/></svg></i><span>Подключения</span></div>
   <div class="ti"><em class="exp arRow"></em><i><svg width="16" height="16" viewBox="0 0 16 16"><circle cx="8" cy="9" r="6" fill="#f4f0e4" stroke="#4a4a44" stroke-width="1.500"/><path d="M8 5v4l3 1" fill="none" stroke="#444"/><path d="M1 4l3-3 2 2-3 3zM15 4l-3-3-2 2 3 3z" fill="#8d7c5e"/></svg></i><span>Автоопрос</span></div>
   <div class="tg h30">Энергоснабжающая<br>организация</div>
   <div class="ti"><i><svg width="16" height="16" viewBox="0 0 16 16"><rect y="3" width="12" height="12" fill="#c3cee0" stroke="#666"/><path d="M5 10L14 1l2 1-9 10z" fill="#d9362a"/><path d="M1 13h8" stroke="#1a1a8c" stroke-width="1.500"/></svg></i><span>Договор</span></div>
   <div class="ti h30"><i><svg width="15" height="15" viewBox="0 0 15 15"><rect y="1" width="12" height="12" fill="#fff" stroke="#888"/><rect width="12" height="3" fill="#d55"/><path d="M2 6h2M5 6h2M8 6h2M2 9h2M5 9h2" stroke="#777"/><circle cx="10.500" cy="10.500" r="4" fill="#fff" stroke="#c33"/><path d="M10.500 8.500v2h2" fill="none" stroke="#c33"/></svg></i><span>Тарифное<br>расписание</span></div>
  </div>
  <div class="split"><u></u><u></u><u></u></div>
  <div class="panel">
   <fieldset class="gb gb1">
    <legend>Расчет архивов</legend>
    <div class="fcols" id="fc1">
     <div class="fcol">
      <div class="bh">Интеграторы:</div>
      <label class="chk mt3"><input class="form-check-input xc" type="checkbox" checked>По потреблению</label>
      <label class="chk"><input class="form-check-input xc" type="checkbox" checked>Интерполяция по имеющимся</label>
      <div class="morebtn"><span>Дополнительно</span><i class="tri"></i></div>
     </div>
     <div class="fcol">
      <div class="bh">Часовой архив:</div>
      <label class="chk r mt3"><input class="form-check-input xr" type="radio" name="a">Не рассчитывать</label>
      <label class="chk r"><input class="form-check-input xr" type="radio" name="a">По интеграторам</label>
      <label class="chk r"><input class="form-check-input xr" type="radio" name="a" checked>По профилю мощности</label>
     </div>
    </div>
    <div class="fcols" id="fc2">
     <div class="fcol">
      <div class="bh">Суточный архив:</div>
      <label class="chk r mt3"><input class="form-check-input xr" type="radio" name="b">Не рассчитывать</label>
      <label class="chk r"><input class="form-check-input xr" type="radio" name="b" checked>По часовому</label>
      <label class="chk r"><input class="form-check-input xr" type="radio" name="b">По интеграторам</label>
     </div>
     <div class="fcol">
      <div class="bh">Месячный архив:</div>
      <label class="chk r mt3"><input class="form-check-input xr" type="radio" name="c">Не рассчитывать</label>
      <label class="chk r"><input class="form-check-input xr" type="radio" name="c" checked>По суточному</label>
      <label class="chk r"><input class="form-check-input xr" type="radio" name="c">По интеграторам</label>
     </div>
    </div>
    <label class="chk dis r" id="d1"><input class="form-check-input xc" type="checkbox" disabled>Рассчитывать недостающие значения во всех архивах</label>
    <label class="chk dis r"><input class="form-check-input xc" type="checkbox" disabled>Рассчитывать недостающие значения теплот Q1 и Q2</label>
    <div class="d-flex align-items-center gap-2" id="rmode"><span class="text-dark">Режим осреднения:</span><div class="combo cdis w165"><span>Среднее арифметическое</span><b><i class="tri"></i></b></div></div>
   </fieldset>
   <fieldset class="gb gb2">
    <legend>Прочее</legend>
    <div class="d-flex align-items-center off" id="dav"><span id="dl1">Измеряемое давление:</span><div class="combo cdis w110" id="dc1"><span>Избыточное</span><b><i class="tri"></i></b></div><span>Отображаемое давление:</span><div class="combo cdis w132" id="dc2"><span>По умолчанию (из с...</span><b><i class="tri"></i></b></div></div>
   </fieldset>
  </div>
 </div>
 <div class="dfoot d-flex align-items-start">
  <button class="btn dbtn" type="button">&lt; Назад</button><button class="btn dbtn" type="button">Далее &gt;</button><button class="btn dbtn m107" type="button" disabled>ОК</button><button class="btn dbtn" type="button">Закрыть</button>
 </div>
</div>
</div>
</body></html>
